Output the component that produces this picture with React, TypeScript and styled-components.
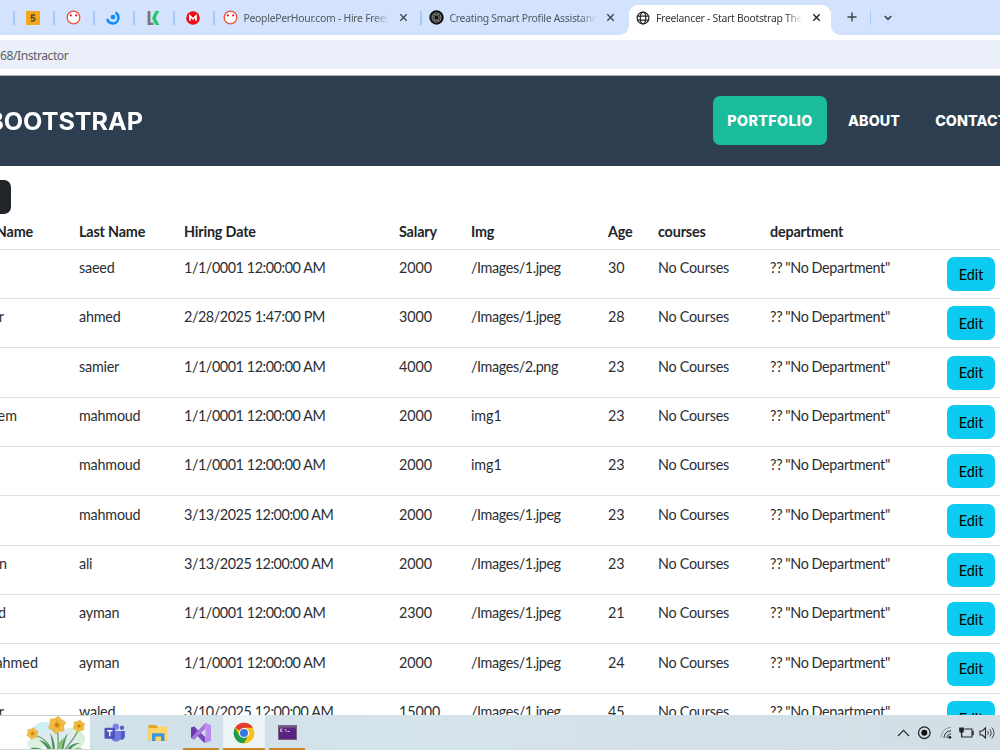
import React from "react";
import styled, { createGlobalStyle } from "styled-components";

const GlobalStyle = createGlobalStyle`
  * { box-sizing: border-box; }
  html, body { margin: 0; overflow: hidden; background: #fff; }
  svg { display: block; flex: none; }
`;

const Screen = styled.div`
  width: 1000px;
  height: 750px;
  overflow: hidden;
  display: flex;
  flex-direction: column;
  background: #fff;
`;

/* ---------- browser chrome ---------- */

const TabStrip = styled.div`
  height: 35px;
  flex: none;
  display: flex;
  align-items: flex-end;
  background: #d3e3fd;
  font-family: "Noto Sans", "Open Sans", sans-serif;
`;

const PinnedTab = styled.div<{ $width: number }>`
  width: ${(p) => p.$width}px;
  height: 35px;
  flex: none;
  display: flex;
  align-items: center;
  justify-content: flex-end;
`;

const Divider = styled.span<{ $gap?: number }>`
  width: 1.5px;
  height: 14px;
  flex: none;
  margin-left: ${(p) => p.$gap ?? 0}px;
  background: #a8c7fa;
`;

const Tab = styled.div<{ $width: number; $left: number; $active?: boolean }>`
  position: relative;
  width: ${(p) => p.$width}px;
  height: ${(p) => (p.$active ? 30 : 35)}px;
  padding: 0 0 ${(p) => (p.$active ? 5 : 0)}px ${(p) => p.$left}px;
  flex: none;
  display: flex;
  align-items: center;
  background: ${(p) => (p.$active ? "#fff" : "transparent")};
  border-radius: 9px 9px 0 0;
  color: ${(p) => (p.$active ? "#33363a" : "#51575f")};
`;

const Flare = styled.span<{ $side: "left" | "right" }>`
  position: absolute;
  bottom: 0;
  ${(p) => p.$side}: -9px;
  width: 9px;
  height: 9px;
  background: radial-gradient(circle at ${(p) => (p.$side === "left" ? "0 0" : "100% 0")}, transparent 8.5px, #fff 9px);
`;

const TabTitle = styled.span<{ $width: number }>`
  width: ${(p) => p.$width}px;
  margin-left: 6px;
  flex: none;
  white-space: nowrap;
  font-size: 10.4px;
  line-height: 16px;
  letter-spacing: -0.27px;
  mask-image: linear-gradient(to right, #000 calc(100% - 16px), transparent);
`;

const CloseIcon = styled.svg`
  margin-left: 10px;
`;

const Toolbar = styled.div`
  height: 41px;
  flex: none;
  padding: 5px 0 6px;
  border-bottom: 1px solid #a9b0b2;
  background: #fff;
`;

const AddressBar = styled.div`
  height: 29px;
  padding-top: 2px;
  display: flex;
  align-items: center;
  background: #ebeff9;
  color: #5b6067;
  font: 12.1px/20px "Noto Sans", "Open Sans", sans-serif;
  letter-spacing: -0.45px;
`;

/* ---------- page ---------- */

const NavBar = styled.nav`
  height: 90px;
  flex: none;
  display: flex;
  align-items: center;
  padding-bottom: 1px;
  background: #2c3e50;
  color: #fff;
  font-family: Inter, "Open Sans", sans-serif;
  font-weight: 700;
  white-space: nowrap;
`;

const Brand = styled.div`
  width: 713px;
  padding-top: 1px;
  flex: none;
  display: flex;
`;

const BrandText = styled.span`
  width: 143px;
  display: flex;
  justify-content: flex-end;
  font-size: 24px;
  transform: scaleX(1.045);
  transform-origin: right;
`;

const NavItem = styled.a<{ $active?: boolean }>`
  height: 49px;
  width: ${(p) => (p.$active ? "114px" : "auto")};
  padding: 0 14px;
  margin-right: 7px;
  flex: none;
  display: flex;
  align-items: center;
  justify-content: center;
  border-radius: 7px;
  font-size: 14.3px;
  font-weight: 800;
  letter-spacing: ${(p) => (p.$active ? 0.35 : 0.1)}px;
  background: ${(p) => (p.$active ? "#1abc9c" : "transparent")};
`;

const Page = styled.main`
  height: 549px;
  flex: none;
  overflow: hidden;
  padding-top: 14px;
  color: #212529;
  font: 14.36px/21.5px Lato, sans-serif;
`;

const CreateButton = styled.div`
  width: 11px;
  height: 34px;
  border-radius: 0 7px 7px 0;
  background: #212529;
`;

const Row = styled.div<{ $head?: boolean }>`
  height: ${(p) => (p.$head ? 35.65 : 49.33)}px;
  padding-top: ${(p) => (p.$head ? 6.5 : 7.5)}px;
  display: grid;
  grid-template-columns: 79px 105px 215px 72px 137px 50px 112px 177px 48px;
  align-items: start;
  border-bottom: 1px solid #dee2e6;
  color: ${(p) => (p.$head ? "#212529" : "#2b2f33")};
  font-weight: ${(p) => (p.$head ? 700 : 400)};
  letter-spacing: ${(p) => (p.$head ? -0.17 : 0)}px;
  white-space: nowrap;
`;

const Cell = styled.span<{ $spacing: number; $word?: number }>`
  letter-spacing: ${(p) => p.$spacing}px;
  word-spacing: ${(p) => p.$word ?? 0}px;
`;

const NameCell = styled.span<{ $end: number }>`
  display: flex;
  justify-content: flex-end;
  width: ${(p) => p.$end}px;
  height: 21px;
`;

const EditButton = styled.button`
  width: 48px;
  height: 34px;
  padding: 0;
  border: 0;
  border-radius: 7px;
  background: #0dcaf0;
  color: #000;
  font: 14.36px/21px Lato, sans-serif;
`;

/* ---------- taskbar ---------- */

const TaskBar = styled.footer`
  height: 35px;
  flex: none;
  display: flex;
  background: linear-gradient(90deg, #cfe0e8, #d5e3ea 40%, #d3dee5);
`;

const Weather = styled.div`
  width: 90px;
  height: 35px;
  padding-left: 25px;
  background: #fff;
  border-top: 1px solid #c9ced1;
  border-bottom: 1px solid #d5d9db;
`;

const TaskApp = styled.div<{ $margin: number; $width: number; $open?: boolean; $focus?: boolean }>`
  width: ${(p) => p.$width}px;
  height: 35px;
  margin-left: ${(p) => p.$margin}px;
  display: flex;
  align-items: center;
  justify-content: center;
  padding-top: 2px;
  background: ${(p) => (p.$focus ? "#edf4f7" : "transparent")};
  border-bottom: 2px solid ${(p) => (p.$open ? "#cc8728" : "transparent")};
`;

const Tray = styled.div`
  margin-left: auto;
  padding-right: 5px;
  display: flex;
  align-items: center;
`;

/* ---------- icons ---------- */

const Fiverr = () => (
  <svg width="14" height="14" viewBox="0 0 14 14">
    <rect width="14" height="14" fill="#f3a81c" />
    <path d="M9.2 4H5.7L5.4 7C7.6 6 9.2 7 8.9 8.6C8.6 10.2 6.4 10.5 4.9 9.6" fill="none" stroke="#5a4a20" strokeWidth="1.5" />
  </svg>
);

const Face = () => (
  <svg width="15" height="15" viewBox="0 0 15 15">
    <circle cx="7.5" cy="7.5" r="6.3" fill="#fff" stroke="#f0503a" strokeWidth="1.3" />
    <circle cx="4.8" cy="5.4" r="1.1" fill="#ee1730" />
    <circle cx="10.2" cy="5.4" r="1.1" fill="#ee1730" />
  </svg>
);

const Swirl = () => (
  <svg width="14" height="14" viewBox="0 0 14 14">
    <circle cx="7" cy="6.1" r="2.4" fill="#0a8cff" />
    <path d="M9.4 1.6C11.5 2.5 12.5 4.4 12.5 6.7C12.4 10 10 12.4 6.9 12.4C4 12.4 1.9 10.4 1.2 7.9" fill="none" stroke="#0a8cff" strokeWidth="2.5" />
  </svg>
);

const Kickresume = () => (
  <svg width="13" height="14" viewBox="0 0 13 14">
    <path d="M2 0V12.8H6.4" fill="none" stroke="#77787c" strokeWidth="2.8" />
    <path d="M8.4 0H12.2L8.7 6.9L12.2 14H8.5L5 7.2Z" fill="#1fc96c" />
  </svg>
);

const Mega = () => (
  <svg width="14" height="14" viewBox="0 0 14 14">
    <circle cx="7" cy="7" r="6.8" fill="#ee0d16" />
    <path d="M4 9.7V5L7 7.8L10 5V9.7" fill="none" stroke="#fff" strokeWidth="1.7" />
  </svg>
);

const DarkSeal = () => (
  <svg width="15" height="15" viewBox="0 0 15 15">
    <circle cx="7.5" cy="7.5" r="7.2" fill="#111" />
    <g fill="none" stroke="#999" strokeWidth=".55">
      <ellipse cx="7.5" cy="7.5" rx="2.3" ry="4.8" />
      <ellipse cx="7.5" cy="7.5" rx="2.3" ry="4.8" transform="rotate(60 7.5 7.5)" />
      <ellipse cx="7.5" cy="7.5" rx="2.3" ry="4.8" transform="rotate(120 7.5 7.5)" />
      <circle cx="7.5" cy="7.5" r="4.7" />
    </g>
  </svg>
);

const Globe = () => (
  <svg width="14" height="14" viewBox="0 0 14 14" fill="none" stroke="#25282b" strokeWidth="1.25">
    <circle cx="7" cy="7" r="5.9" />
    <ellipse cx="7" cy="7" rx="2.7" ry="5.9" />
    <path d="M1.5 5H12.5M1.5 9H12.5" />
  </svg>
);

const Close = ({ dark }: { dark?: boolean }) => (
  <CloseIcon width="9" height="9" viewBox="0 0 9 9">
    <path d="M1.3 1.3L7.7 7.7M7.7 1.3L1.3 7.7" stroke={dark ? "#1f2225" : "#3f454c"} strokeWidth="1.35" />
  </CloseIcon>
);

const PlusIcon = styled.svg`
  margin: 0 0 13px 16px;
`;

const EndTools = styled.div`
  height: 35px;
  display: flex;
  align-items: center;
`;

const Chevron = styled.svg`
  margin-left: 13px;
`;

const petals = [0, 60, 120, 180, 240, 300];

const Flower = ({ x, y, s }: { x: number; y: number; s: number }) => (
  <g transform={`translate(${x} ${y}) scale(${s})`}>
    {petals.map((a) => (
      <path key={a} d="M0 0C-6-3-4-6 0-9C4-6 6-3 0 0Z" transform={`rotate(${a + 10})`} fill="#f3bd43" stroke="#dba02f" strokeWidth=".5" />
    ))}
    <circle r="3" fill="#df9a22" />
    <circle r="1.4" fill="#bd750f" />
  </g>
);

const Daffodils = () => (
  <svg width="62" height="33" viewBox="0 0 62 33" overflow="hidden">
    <ellipse cx="20" cy="17" rx="13" ry="11" fill="#cdeef5" />
    <ellipse cx="46" cy="23" rx="14" ry="11" fill="#d8f0da" />
    <ellipse cx="34" cy="24" rx="18" ry="12" fill="#dfe9f0" />
    <ellipse cx="11" cy="28" rx="9" ry="6" fill="#dcf0df" />
    <g fill="none" stroke="#5d9f5a" strokeWidth="1.2">
      <path d="M32 13C34 22 33 28 33 35M11 20C18 21 24 28 27 35M53 14C50 23 43 28 39 35" />
    </g>
    <g fill="#4b9357">
      <path d="M26 35C24 28 19 25 14 24C20 29 22 31 23 35ZM30 35C30 27 28 21 25 17C27 24 27 30 28 35ZM36 35C37 27 39 21 43 17C40 25 39 30 38 35ZM41 35C44 29 49 27 55 27C49 29 46 32 45 35ZM20 35C17 32 10 31 5 32C10 34 13 34 16 35Z" />
    </g>
    <path d="M32 35C32 27 37 23 41 21C37 27 36 31 35 35ZM47 35C49 32 53 31 57 32L54 35Z" fill="#86bd70" />
    <Flower x={7.5} y={17.5} s={0.68} />
    <Flower x={32} y={9} s={1} />
    <Flower x={54} y={10} s={0.7} />
  </svg>
);

const Teams = () => (
  <svg width="22" height="20" viewBox="0 0 22 20">
    <circle cx="18" cy="4.8" r="2.2" fill="#5b62c5" />
    <circle cx="11.8" cy="3.8" r="3.2" fill="#7b83eb" />
    <path d="M14 8H20.8V13.5C20.8 16.2 18 17.5 15.5 16Z" fill="#5059c9" />
    <path d="M7 8H17V14C17 20 7 20 7 14Z" fill="#7279dd" />
    <rect x=".5" y="4.7" width="10.5" height="11" rx="1" fill="#4b53bc" />
    <path d="M3 7.7H8.5M5.75 7.7V13.2" stroke="#fff" strokeWidth="1.4" />
  </svg>
);

const Folder = () => (
  <svg width="20" height="18" viewBox="0 0 20 18">
    <path d="M.5 1H8L9.5 3H19V16.5H.5Z" fill="#e4a51d" />
    <path d="M.5 4H9L10.5 2.5H19.5V16.7H.5Z" fill="#ffd56a" />
    <path d="M4 17V9.3H16.5V17H13V12.5H7.5V17Z" fill="#3696df" />
  </svg>
);

const VisualStudio = () => (
  <svg width="22" height="22" viewBox="0 0 22 22">
    <path d="M1 5.8L4.2 4.5L15.5 15.2V21L13.2 19.9L1 7Z" fill="#7d47bf" />
    <path d="M1 5.8L4.2 4.5L5.5 6V16L4.2 17.5L1 16Z" fill="#6a38aa" />
    <path d="M4.2 17.5L1 16L15.5 .8V6.8Z" fill="#a875df" />
    <path d="M15.5.8L21 3.3V18.7L15.5 21Z" fill="#bd8cf0" />
  </svg>
);

const Chrome = () => (
  <svg width="22" height="22" viewBox="0 0 22 22">
    <circle cx="11" cy="11" r="10.3" fill="#fbc116" />
    <path d="M11 11L2.1 5.8A10.3 10.3 0 0 1 19.9 5.8H11Z" fill="#e33b2e" />
    <path d="M2.1 5.8A10.3 10.3 0 0 0 11 21.3L15.5 13.5L11 11L6.5 13.5Z" fill="#229b4b" />
    <path d="M11 5.9H19.9A10.3 10.3 0 0 1 11 21.3L15.5 13.6Z" fill="#fbc116" />
    <circle cx="11" cy="11" r="5.1" fill="#fff" />
    <circle cx="11" cy="11" r="4" fill="#3478e5" />
  </svg>
);

const Terminal = () => (
  <svg width="19" height="15" viewBox="0 0 19 15">
    <rect x=".5" y=".5" width="18" height="14" fill="#592381" stroke="#776482" />
    <rect x="1" y="1" width="17" height="1.5" fill="#786681" />
    <path d="M4.5 4H2.7V6.4H4.5M6 4.5V4.6M6 6V6.1M7 4L8.6 6.5M9.5 6.5H11.5" fill="none" stroke="#fff" strokeWidth=".8" />
  </svg>
);

const TrayIcons = () => (
  <svg width="100" height="20" viewBox="895 723 100 20" fill="none" stroke="#252a2d" strokeWidth="1.1">
    <path d="M898 736L903.5 730.3L909 736" />
    <circle cx="924.3" cy="732.7" r="5.8" strokeWidth="1.3" />
    <circle cx="924.3" cy="732.7" r="3" fill="#111" stroke="none" />
    <g strokeWidth="1">
      <path d="M941 737.5C941.5 731.5 945.5 727.7 951 727.5" stroke="#8b979e" />
      <path d="M944 738C944.3 733.7 947 731 951 730.8" />
      <path d="M946.8 738C947 735.7 948.5 734 951 733.8" />
    </g>
    <circle cx="949.8" cy="737.3" r="1.5" fill="#252a2d" stroke="none" />
    <path d="M964.5 729H972V737H961.7V733.5M972 731.2H973.2V734.8H972" />
    <path d="M959.7 728V730.7C959.7 733 963.4 733 963.4 730.7V728ZM961.5 732.5V737" fill="#252a2d" />
    <path d="M980 731H982.3L985.5 727.8V738L982.3 735H980Z" />
    <path d="M987.5 731C988.5 732 988.5 734 987.5 735M989.7 729.3C991.6 731.3 991.6 734.5 989.7 736.6M991.8 727.6C994.6 730.5 994.6 735.3 991.8 738.2" strokeWidth=".9" />
  </svg>
);

/* ---------- data ---------- */

type Instructor = [string, number, string, string, string, string, string];

const instructors: Instructor[] = [
  ["", 0, "saeed", "1/1/0001 12:00:00 AM", "2000", "/Images/1.jpeg", "30"],
  ["r", 4, "ahmed", "2/28/2025 1:47:00 PM", "3000", "/Images/1.jpeg", "28"],
  ["", 0, "samier", "1/1/0001 12:00:00 AM", "4000", "/Images/2.png", "23"],
  ["em", 17, "mahmoud", "1/1/0001 12:00:00 AM", "2000", "img1", "23"],
  ["", 0, "mahmoud", "1/1/0001 12:00:00 AM", "2000", "img1", "23"],
  ["", 0, "mahmoud", "3/13/2025 12:00:00 AM", "2000", "/Images/1.jpeg", "23"],
  ["n", 7, "ali", "3/13/2025 12:00:00 AM", "2000", "/Images/1.jpeg", "23"],
  ["d", 6, "ayman", "1/1/0001 12:00:00 AM", "2300", "/Images/1.jpeg", "21"],
  ["ahmed", 38, "ayman", "1/1/0001 12:00:00 AM", "2000", "/Images/1.jpeg", "24"],
  ["r", 4, "waled", "3/10/2025 12:00:00 AM", "15000", "/Images/1.jpeg", "45"],
];

const headings = ["Last Name", "Hiring Date", "Salary", "Img", "Age", "courses", "department"];

export default function App() {
  return (
    <>
      <GlobalStyle />
      <Screen>
        <TabStrip>
          <PinnedTab $width={14.5}><Divider /></PinnedTab>
          <PinnedTab $width={40}><Fiverr /><Divider $gap={13} /></PinnedTab>
          <PinnedTab $width={40}><Face /><Divider $gap={12} /></PinnedTab>
          <PinnedTab $width={40}><Swirl /><Divider $gap={13} /></PinnedTab>
          <PinnedTab $width={40}><Kickresume /><Divider $gap={13} /></PinnedTab>
          <PinnedTab $width={40}><Mega /><Divider $gap={13} /></PinnedTab>
          <Tab $width={206.5} $left={8}>
            <Face />
            <TabTitle $width={145}>PeoplePerHour.com - Hire Freel</TabTitle>
            <Close />
            <Divider $gap={12.5} />
          </Tab>
          <Tab $width={208} $left={7.5}>
            <DarkSeal />
            <TabTitle $width={146}>Creating Smart Profile Assistanc</TabTitle>
            <Close />
          </Tab>
          <Tab $width={202} $left={7} $active>
            <Flare $side="left" />
            <Globe />
            <TabTitle $width={146}>Freelancer - Start Bootstrap The</TabTitle>
            <Close dark />
            <Flare $side="right" />
          </Tab>
          <PlusIcon width="10" height="10" viewBox="0 0 10 10">
            <path d="M5 .5V9.5M.5 5H9.5" stroke="#3b4148" strokeWidth="1.4" />
          </PlusIcon>
          <EndTools>
            <Divider $gap={12.5} />
            <Chevron width="8" height="6" viewBox="0 0 8 6">
              <path d="M.8 1L4 4.3L7.2 1" fill="none" stroke="#3b4148" strokeWidth="1.6" />
            </Chevron>
          </EndTools>
        </TabStrip>
        <Toolbar>
          <AddressBar>68/Instractor</AddressBar>
        </Toolbar>

        <NavBar>
          <Brand><BrandText>BOOTSTRAP</BrandText></Brand>
          <NavItem $active>PORTFOLIO</NavItem>
          <NavItem>ABOUT</NavItem>
          <NavItem>CONTACT</NavItem>
        </NavBar>

        <Page>
          <CreateButton />
          <Row $head>
            <NameCell $end={33}>Name</NameCell>
            {headings.map((h) => <span key={h}>{h}</span>)}
          </Row>
          {instructors.map(([first, end, last, date, salary, img, age], i) => (
            <Row key={i}>
              <NameCell $end={end}>{first}</NameCell>
              <Cell $spacing={-0.22}>{last}</Cell>
              <Cell $spacing={-0.43}>{date}</Cell>
              <Cell $spacing={-0.05}>{salary}</Cell>
              <Cell $spacing={img.startsWith("/") ? -0.4 : -0.1}>{img}</Cell>
              <Cell $spacing={-0.1}>{age}</Cell>
              <Cell $spacing={-0.2} $word={-0.3}>No Courses</Cell>
              <Cell $spacing={-0.3} $word={-0.4}>?? "No Department"</Cell>
              <EditButton>Edit</EditButton>
            </Row>
          ))}
        </Page>

        <TaskBar>
          <Weather><Daffodils /></Weather>
          <TaskApp $margin={7} $width={35}><Teams /></TaskApp>
          <TaskApp $margin={8} $width={35}><Folder /></TaskApp>
          <TaskApp $margin={8} $width={36} $open><VisualStudio /></TaskApp>
          <TaskApp $margin={4} $width={42} $open $focus><Chrome /></TaskApp>
          <TaskApp $margin={4} $width={36} $open><Terminal /></TaskApp>
          <Tray><TrayIcons /></Tray>
        </TaskBar>
      </Screen>
    </>
  );
}
